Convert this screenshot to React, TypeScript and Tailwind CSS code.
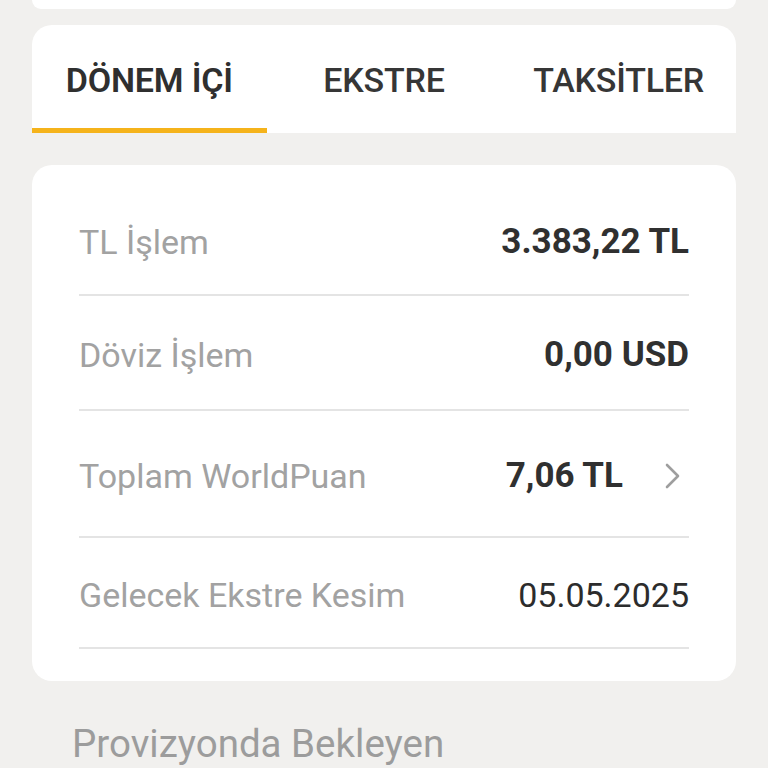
import React from 'react';

// ── Card summary rows ────────────────────────────────────────────────────────
type Row = {
  label: string;
  value: string;
  bold: boolean;
  chevron?: boolean;
  h: string;
};

const rows: Row[] = [
  { label: 'TL İşlem', value: '3.383,22 TL', bold: true, h: 'h-[109px]' },
  { label: 'Döviz İşlem', value: '0,00 USD', bold: true, h: 'h-[113px]' },
  { label: 'Toplam WorldPuan', value: '7,06 TL', bold: true, chevron: true, h: 'h-[125px]' },
  { label: 'Gelecek Ekstre Kesim', value: '05.05.2025', bold: false, h: 'h-[109px]' },
];

const tabs = ['DÖNEM İÇİ', 'EKSTRE', 'TAKSİTLER'];

const Chevron: React.FC = () => (
  <svg viewBox="0 0 20 28" className="w-[20px] h-[28px] mr-[6px] text-[#9e9e9e]" fill="none">
    <path d="M4 3l11 11L4 25" stroke="currentColor" strokeWidth="2.6" strokeLinecap="round" strokeLinejoin="round" />
  </svg>
);

export default function App() {
  return (
    <div
      className="w-[768px] h-[768px] overflow-hidden bg-[#f1f0ee] px-[32px] text-[#333333]"
      style={{ fontFamily: 'Roboto, "Noto Sans", sans-serif' }}
    >
      {/* previous card, mostly scrolled off */}
      <div className="h-[9px] bg-white rounded-b-[18px]" />

      {/* tabs */}
      <div className="mt-[16px] bg-white rounded-t-[20px] grid grid-cols-3 h-[108px]">
        {tabs.map((t, i) => (
          <div key={t} className="flex flex-col">
            <div
              className={`flex-1 flex items-center justify-center pt-[6px] text-[34px] leading-none tracking-[-0.2px] ${
                i === 0 ? 'font-semibold text-[#2f2f2f]' : 'font-medium text-[#363636]'
              }`}
            >
              {t}
            </div>
            <div className={`h-[5px] ${i === 0 ? 'bg-[#f5b31b]' : 'bg-transparent'}`} />
          </div>
        ))}
      </div>

      {/* summary card */}
      <div className="mt-[32px] bg-white rounded-[20px] px-[47px] pt-[20px] pb-[32px]">
        {rows.map((r) => (
          <div key={r.label}>
            <div className={`${r.h} flex items-center justify-between pt-[4px]`}>
              <span className="text-[34px] text-[#a2a2a2] leading-none">{r.label}</span>
              <div className="flex items-center gap-[40px]">
                <span
                  className={`leading-none ${
                    r.bold ? 'text-[35px] font-bold text-[#303030]' : 'text-[34px] font-normal text-[#2c2c2c]'
                  }`}
                >
                  {r.value}
                </span>
                {r.chevron && <Chevron />}
              </div>
            </div>
            <div className="h-[2px] bg-[#e4e4e4]" />
          </div>
        ))}
      </div>

      <div className="mt-[44px] pl-[40px] text-[38.5px] text-[#9c9c9c] leading-none">Provizyonda Bekleyen</div>
    </div>
  );
}
